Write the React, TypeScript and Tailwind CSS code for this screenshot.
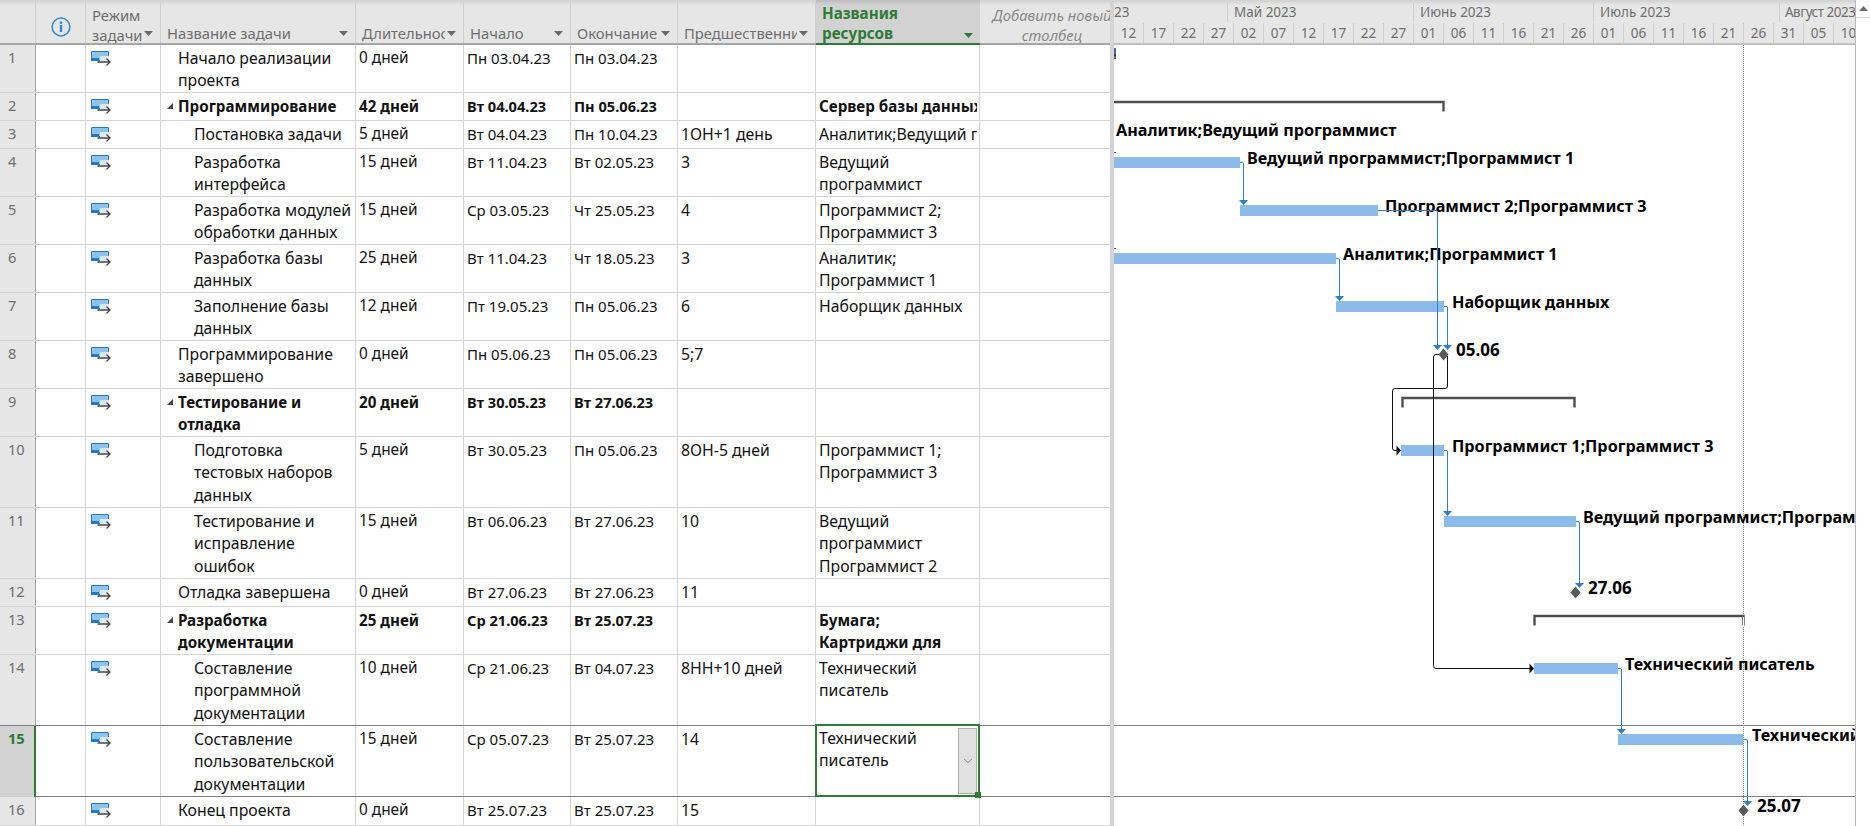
import { ChevronDown } from 'lucide-react';

type Row = {
  id: number;
  h: string;
  level: number;
  bold?: boolean;
  name: string[];
  dur: string;
  start: string;
  end: string;
  pred?: string;
  res?: string[];
};

const rows: Row[] = [
  { id: 1, h: 'h-[48px]', level: 1, name: ['Начало реализации', 'проекта'], dur: '0 дней', start: 'Пн 03.04.23', end: 'Пн 03.04.23' },
  { id: 2, h: 'h-[28px]', level: 1, bold: true, name: ['Программирование'], dur: '42 дней', start: 'Вт 04.04.23', end: 'Пн 05.06.23', res: ['Сервер базы данных'] },
  { id: 3, h: 'h-[28px]', level: 2, name: ['Постановка задачи'], dur: '5 дней', start: 'Вт 04.04.23', end: 'Пн 10.04.23', pred: '1ОН+1 день', res: ['Аналитик;Ведущий программист'] },
  { id: 4, h: 'h-[48px]', level: 2, name: ['Разработка', 'интерфейса'], dur: '15 дней', start: 'Вт 11.04.23', end: 'Вт 02.05.23', pred: '3', res: ['Ведущий', 'программист'] },
  { id: 5, h: 'h-[48px]', level: 2, name: ['Разработка модулей', 'обработки данных'], dur: '15 дней', start: 'Ср 03.05.23', end: 'Чт 25.05.23', pred: '4', res: ['Программист 2;', 'Программист 3'] },
  { id: 6, h: 'h-[48px]', level: 2, name: ['Разработка базы', 'данных'], dur: '25 дней', start: 'Вт 11.04.23', end: 'Чт 18.05.23', pred: '3', res: ['Аналитик;', 'Программист 1'] },
  { id: 7, h: 'h-[48px]', level: 2, name: ['Заполнение базы', 'данных'], dur: '12 дней', start: 'Пт 19.05.23', end: 'Пн 05.06.23', pred: '6', res: ['Наборщик данных'] },
  { id: 8, h: 'h-[48px]', level: 1, name: ['Программирование', 'завершено'], dur: '0 дней', start: 'Пн 05.06.23', end: 'Пн 05.06.23', pred: '5;7' },
  { id: 9, h: 'h-[48px]', level: 1, bold: true, name: ['Тестирование и', 'отладка'], dur: '20 дней', start: 'Вт 30.05.23', end: 'Вт 27.06.23' },
  { id: 10, h: 'h-[71px]', level: 2, name: ['Подготовка', 'тестовых наборов', 'данных'], dur: '5 дней', start: 'Вт 30.05.23', end: 'Пн 05.06.23', pred: '8ОН-5 дней', res: ['Программист 1;', 'Программист 3'] },
  { id: 11, h: 'h-[71px]', level: 2, name: ['Тестирование и', 'исправление', 'ошибок'], dur: '15 дней', start: 'Вт 06.06.23', end: 'Вт 27.06.23', pred: '10', res: ['Ведущий', 'программист', 'Программист 2'] },
  { id: 12, h: 'h-[28px]', level: 1, name: ['Отладка завершена'], dur: '0 дней', start: 'Вт 27.06.23', end: 'Вт 27.06.23', pred: '11' },
  { id: 13, h: 'h-[48px]', level: 1, bold: true, name: ['Разработка', 'документации'], dur: '25 дней', start: 'Ср 21.06.23', end: 'Вт 25.07.23', res: ['Бумага;', 'Картриджи для'] },
  { id: 14, h: 'h-[71px]', level: 2, name: ['Составление', 'программной', 'документации'], dur: '10 дней', start: 'Ср 21.06.23', end: 'Вт 04.07.23', pred: '8НН+10 дней', res: ['Технический', 'писатель'] },
  { id: 15, h: 'h-[71px]', level: 2, name: ['Составление', 'пользовательской', 'документации'], dur: '15 дней', start: 'Ср 05.07.23', end: 'Вт 25.07.23', pred: '14', res: ['Технический', 'писатель'] },
  { id: 16, h: 'h-[29px]', level: 1, name: ['Конец проекта'], dur: '0 дней', start: 'Вт 25.07.23', end: 'Вт 25.07.23', pred: '15' },
];

const days = ['12', '17', '22', '27', '02', '07', '12', '17', '22', '27', '01', '06', '11', '16', '21', '26', '01', '06', '11', '16', '21', '26', '31', '05', '10'];

// gantt items are kept in page coordinates, the chart body starts at OX, OY
const OX = 1114;
const OY = 45;

const bars = [
  [1113, 157, 1240, 168],
  [1240, 205, 1378, 216],
  [1113, 253, 1336, 264],
  [1336, 301, 1444, 312],
  [1401, 445, 1444, 456],
  [1444, 516, 1576, 527],
  [1534, 663, 1618, 674],
  [1618, 734, 1743, 745],
];

const labels: [string, number, number][] = [
  ['Аналитик;Ведущий программист', 1116, 130],
  ['Ведущий программист;Программист 1', 1247, 158],
  ['Программист 2;Программист 3', 1385, 206],
  ['Аналитик;Программист 1', 1343, 254],
  ['Наборщик данных', 1452, 302],
  ['05.06', 1456, 350],
  ['Программист 1;Программист 3', 1452, 446],
  ['Ведущий программист;Программист 2', 1583, 517],
  ['27.06', 1588, 588],
  ['Технический писатель', 1625, 664],
  ['Технический писатель', 1752, 735],
  ['25.07', 1757, 806],
];

const blueLinks = [
  'M1240 162.5H1242.5Q1243.5 162.5 1243.5 164V201',
  'M1378 210.5H1436Q1437.5 210.5 1437.5 212V346',
  'M1336 258.5H1338.5Q1339.5 258.5 1339.5 260V297',
  'M1444 306.5H1447Q1447.5 306.5 1447.5 308V346',
  'M1444 450.5H1447Q1447.5 450.5 1447.5 452V512',
  'M1576 521.5H1578Q1579.5 521.5 1579.5 523V584',
  'M1618 668.5H1620.5Q1621.5 668.5 1621.5 670V730',
  'M1743 739.5H1746Q1747.5 739.5 1747.5 741V802',
];
const blueHeads: [number, number][] = [
  [1243.5, 205],
  [1437.5, 350],
  [1339.5, 301],
  [1447.5, 350],
  [1447.5, 516],
  [1579.5, 588],
  [1621.5, 734],
  [1747.5, 806],
];

const summaries = [
  [1113, 1445, 101, false],
  [1401, 1576, 397, true],
  [1533, 1745, 615, true],
] as const;

function ModeIcon() {
  return (
    <svg width="20" height="16" viewBox="0 0 20 16" className="block">
      <rect x="0.5" y="0.5" width="17" height="9" rx="0.5" fill="#8fc3f0" stroke="#1f78c8" />
      <rect x="0" y="7" width="8" height="3" fill="#1f78c8" />
      <rect x="9" y="5" width="9" height="5" fill="#dcecfa" />
      <path d="M6.5 11h12.5M15.5 7.5L19 11l-3.5 3.5" fill="none" stroke="#444" strokeWidth="1.3" />
    </svg>
  );
}

function SortArrow({ green }: { green?: boolean }) {
  return (
    <svg width="9" height="5" viewBox="0 0 9 5" className="shrink-0">
      <path d="M0 0h9L4.5 5z" fill={green ? '#2f7a37' : '#6a6a6a'} />
    </svg>
  );
}

function HeaderCell({ w, lines }: { w: string; lines: string[] }) {
  return (
    <div className={`${w} shrink-0 flex items-end border-r border-[#cfcfcf] pl-[6px] pr-[7px] text-[14.8px] text-[#6e6e6e] leading-[20px]`}>
      <div className={`flex-1 min-w-0 whitespace-nowrap ${lines.length > 1 ? '-mb-[2px]' : 'overflow-hidden'}`}>
        {lines.map((l) => (
          <div key={l}>{l}</div>
        ))}
      </div>
      <div className="pb-[7px] pl-[2px]">
        <SortArrow />
      </div>
    </div>
  );
}

function Cell({ w, lines, className = '' }: { w: string; lines?: string[]; className?: string }) {
  return (
    <div className={`${w} shrink-0 border-r border-[#d4d4d4] pl-[3px] pt-[2px] overflow-hidden whitespace-nowrap leading-[22.3px] ${className}`}>
      {lines?.map((l) => (
        <div key={l}>{l}</div>
      ))}
    </div>
  );
}

function TableRow({ row }: { row: Row }) {
  const selected = row.id === 15;
  const lineColor = selected || row.id === 14 ? 'border-[#7f7f7f]' : 'border-[#d4d4d4]';
  const dateText = row.bold ? 'font-bold text-[14.6px]' : 'text-[15px]';
  const textStyle = row.bold ? 'font-bold text-[15.2px]' : '';
  return (
    <div className={`flex ${row.h} border-b ${lineColor}`}>
      <div
        className={`w-[36px] shrink-0 pl-[8px] pt-[1px] leading-[22px] text-[14.6px] ${
          selected ? 'bg-[#d2d2d2] text-[#2f7a37] font-bold border-r-2 border-[#2f7a37] -mb-px' : 'bg-[#e6e6e6] text-[#6e6e6e] border-r border-[#a6a6a6]'
        }`}
      >
        {row.id}
      </div>
      <div className="w-[50px] shrink-0 border-r border-[#d4d4d4]" />
      <div className="w-[75px] shrink-0 border-r border-[#d4d4d4] pl-[5px] pt-[6px]">
        <ModeIcon />
      </div>
      <div className="w-[195px] shrink-0 border-r border-[#d4d4d4] pt-[2px] leading-[22.3px] whitespace-nowrap overflow-hidden relative">
        {row.bold && (
          <svg width="6" height="6" viewBox="0 0 6 6" className="absolute left-[6px] top-[10px]">
            <path d="M6 0v6H0z" fill="#444" />
          </svg>
        )}
        <div className={`${row.level === 1 ? 'pl-[17px]' : 'pl-[33px]'} ${textStyle}`}>
          {row.name.map((l) => (
            <div key={l}>{l}</div>
          ))}
        </div>
      </div>
      <Cell w="w-[108px]" lines={[row.dur]} className={row.bold ? textStyle : 'text-[15.4px]'} />
      <Cell w="w-[107px]" lines={[row.start]} className={dateText} />
      <Cell w="w-[107px]" lines={[row.end]} className={dateText} />
      <Cell w="w-[138px]" lines={row.pred ? [row.pred] : undefined} />
      {selected ? (
        <div className="w-[165px] shrink-0 relative z-10 -mt-[2px] -mb-px -ml-px -mr-px border-2 border-[#2f7a37] pl-[2px] pt-[1px] leading-[22.3px] bg-white flex justify-between">
          <div className="overflow-hidden whitespace-nowrap">
            {row.res?.map((l) => (
              <div key={l}>{l}</div>
            ))}
          </div>
          <div className="w-[19px] mt-[1px] mb-[1px] mr-[1px] bg-[#e1e1e1] border border-[#adadad] flex items-center justify-center">
            <ChevronDown size={14} strokeWidth={1} className="text-[#444]" />
          </div>
          <div className="absolute -right-[3px] -bottom-[3px] w-[6px] h-[6px] bg-[#2f7a37]" />
        </div>
      ) : (
        <div className={`w-[164px] shrink-0 border-r border-[#d4d4d4] pl-[3px] pr-[2px] pt-[2px] leading-[22.3px] ${textStyle}`}>
          {row.res?.map((l) => (
            <div key={l} className="overflow-hidden whitespace-nowrap">
              {l}
            </div>
          ))}
        </div>
      )}
      <div className="flex-1" />
    </div>
  );
}

export default function App() {
  return (
    <div className="w-[1870px] h-[826px] overflow-hidden bg-white flex text-[15.8px] text-[#111] font-['Noto_Sans','Open_Sans',sans-serif]">
      {/* sheet */}
      <div className="w-[1110px] shrink-0 flex flex-col">
        <div className="h-[45px] shrink-0 flex bg-gradient-to-b from-[#d0d0d0] via-[#e6e6e6] via-[12%] to-[#e6e6e6] border-b-2 border-[#a6a6a6]">
          <div className="w-[36px] shrink-0 border-r border-[#cfcfcf]" />
          <div className="w-[50px] shrink-0 border-r border-[#cfcfcf] flex items-center justify-center pt-[10px]">
            <svg width="20" height="20" viewBox="0 0 20 20">
              <circle cx="10" cy="10" r="8.9" fill="none" stroke="#2a8bd8" strokeWidth="1.5" />
              <rect x="8.8" y="4.5" width="2.4" height="2.4" fill="#2a8bd8" />
              <rect x="8.8" y="8" width="2.4" height="7" fill="#2a8bd8" />
            </svg>
          </div>
          <HeaderCell w="w-[75px]" lines={['Режим', 'задачи']} />
          <HeaderCell w="w-[195px]" lines={['Название задачи']} />
          <HeaderCell w="w-[108px]" lines={['Длительность']} />
          <HeaderCell w="w-[107px]" lines={['Начало']} />
          <HeaderCell w="w-[107px]" lines={['Окончание']} />
          <HeaderCell w="w-[138px]" lines={['Предшественники']} />
          <div className="w-[164px] shrink-0 relative bg-gradient-to-b from-[#bdbdbd] via-[#d2d2d2] via-[12%] to-[#d2d2d2] border-b-2 -mb-[2px] border-[#2f7a37] pl-[6px] pr-[7px] flex items-end justify-between text-[#2f7a37] font-bold text-[15.2px] leading-[20px]">
            <div>
              <div>Названия</div>
              <div>ресурсов</div>
            </div>
            <div className="pb-[5px]">
              <SortArrow green />
            </div>
          </div>
          <div className="flex-1 flex flex-col justify-end items-center pl-[14px] -mb-[2px] text-[14.8px] text-[#8a8a8a] italic leading-[20px] whitespace-nowrap overflow-hidden">
            <div>Добавить новый</div>
            <div>столбец</div>
          </div>
        </div>
        {rows.map((r) => (
          <TableRow key={r.id} row={r} />
        ))}
      </div>

      {/* splitter */}
      <div className="w-[4px] shrink-0 bg-[#d4d4d4]" />

      {/* chart */}
      <div className="w-[742px] shrink-0 flex flex-col border-r border-[#b8b8b8]">
        <div className="h-[45px] shrink-0 bg-gradient-to-b from-[#d0d0d0] via-[#e6e6e6] via-[12%] to-[#e6e6e6] border-b-2 border-[#c0c0c0] overflow-hidden text-[#6e6e6e] text-[13.5px]">
          <div className="h-[23px] flex items-end pb-[1px] whitespace-nowrap">
            <div className="w-[114px] shrink-0 border-r border-[#cfcfcf]">23</div>
            <div className="w-[186px] shrink-0 border-r border-[#cfcfcf] pl-[6px]">Май 2023</div>
            <div className="w-[180px] shrink-0 border-r border-[#cfcfcf] pl-[6px]">Июнь 2023</div>
            <div className="w-[186px] shrink-0 border-r border-[#cfcfcf] pl-[6px]">Июль 2023</div>
            <div className="flex-1 pl-[5px] tracking-[-0.5px]">Август 2023</div>
          </div>
          <div className="h-[20px] flex">
            {days.map((d, i) => (
              <div key={i} className="w-[30px] shrink-0 text-center border-r border-[#cfcfcf] leading-[20px]">
                {d}
              </div>
            ))}
          </div>
        </div>

        <div className="flex-1 relative overflow-hidden">
          <div className="absolute left-0 right-0 top-[680px] border-t border-[#7f7f7f]" />
          <div className="absolute left-0 right-0 top-[751px] border-t border-[#7f7f7f]" />
          <div className="absolute top-0 bottom-0 left-[629px] border-l border-dotted border-[#8a8a8a]" />

          {bars.map(([x1, y1, x2, y2]) => (
            <div
              key={`${x1}-${y1}`}
              className="absolute bg-[#8abbeb]"
              style={{ left: x1 - OX, top: y1 - OY, width: x2 - x1, height: y2 - y1 }}
            />
          ))}

          {labels.map(([text, x, y]) => (
            <div
              key={`${text}-${x}`}
              className={`absolute font-bold ${/^\d/.test(text) ? 'text-[17px]' : 'text-[16.2px]'} text-black leading-[20px] whitespace-nowrap`}
              style={{ left: x - OX, top: y - OY - 10 }}
            >
              {text}
            </div>
          ))}

          <svg width="741" height="781" viewBox={`${OX} ${OY} 741 781`} className="absolute left-0 top-0">
            {summaries.map(([x1, x2, y, left]) => (
              <path
                key={y}
                d={`${left ? `M${x1 + 1.5} ${y + 10.5}V${y + 1}` : `M${x1} ${y + 1}`}H${x2 - 1.5}V${y + 10.5}`}
                fill="none"
                stroke="#4f4f4f"
                strokeWidth="2.4"
              />
            ))}
            <path d="M1743.5 617V626" stroke="#fff" strokeWidth="1" />
            {blueLinks.map((d) => (
              <path key={d} d={d} fill="none" stroke="#2b7cd3" strokeWidth="1" />
            ))}
            {blueHeads.map(([x, y]) => (
              <path key={`${x}-${y}`} d={`M${x - 4.5} ${y - 5}h9L${x} ${y}z`} fill="#2b7cd3" />
            ))}
            <path d="M1447.5 356V386Q1447.5 388.5 1445 388.5H1395Q1392.5 388.5 1392.5 391V448Q1392.5 450.5 1395 450.5H1397" fill="none" stroke="#111" strokeWidth="1" />
            <path d="M1396.5 445.5L1401 450.5L1396.5 455.5z" fill="#111" />
            <path d="M1441 354.5H1436Q1433.5 354.5 1433.5 357V665.5Q1433.5 668.5 1436 668.5H1530" fill="none" stroke="#111" strokeWidth="1" />
            <path d="M1529.5 663.5L1534 668.5L1529.5 673.5z" fill="#111" />
            <path d="M1443.5 348.5L1448.5 354.5L1443.5 360.5L1438.5 354.5z" fill="#595959" />
            <path d="M1575.5 586.5L1580.5 592.5L1575.5 598.5L1570.5 592.5z" fill="#595959" />
            <path d="M1743.5 804.5L1748.5 810.5L1743.5 816.5L1738.5 810.5z" fill="#595959" />
            <path d="M1115 48V59M1113 55H1116" fill="none" stroke="#1e3a5f" strokeWidth="1.5" />
            <path d="M1113 152.5H1116M1113 248.5H1116" fill="none" stroke="#2b7cd3" strokeWidth="1" />
          </svg>
        </div>
      </div>

      {/* scrollbar */}
      <div className="flex-1">
        <div className="h-[18px] border-b border-[#d4d4d4] flex items-center justify-center">
          <svg width="9" height="5" viewBox="0 0 9 5">
            <path d="M4.5 0L9 5H0z" fill="#6a6a6a" />
          </svg>
        </div>
      </div>
    </div>
  );
}
